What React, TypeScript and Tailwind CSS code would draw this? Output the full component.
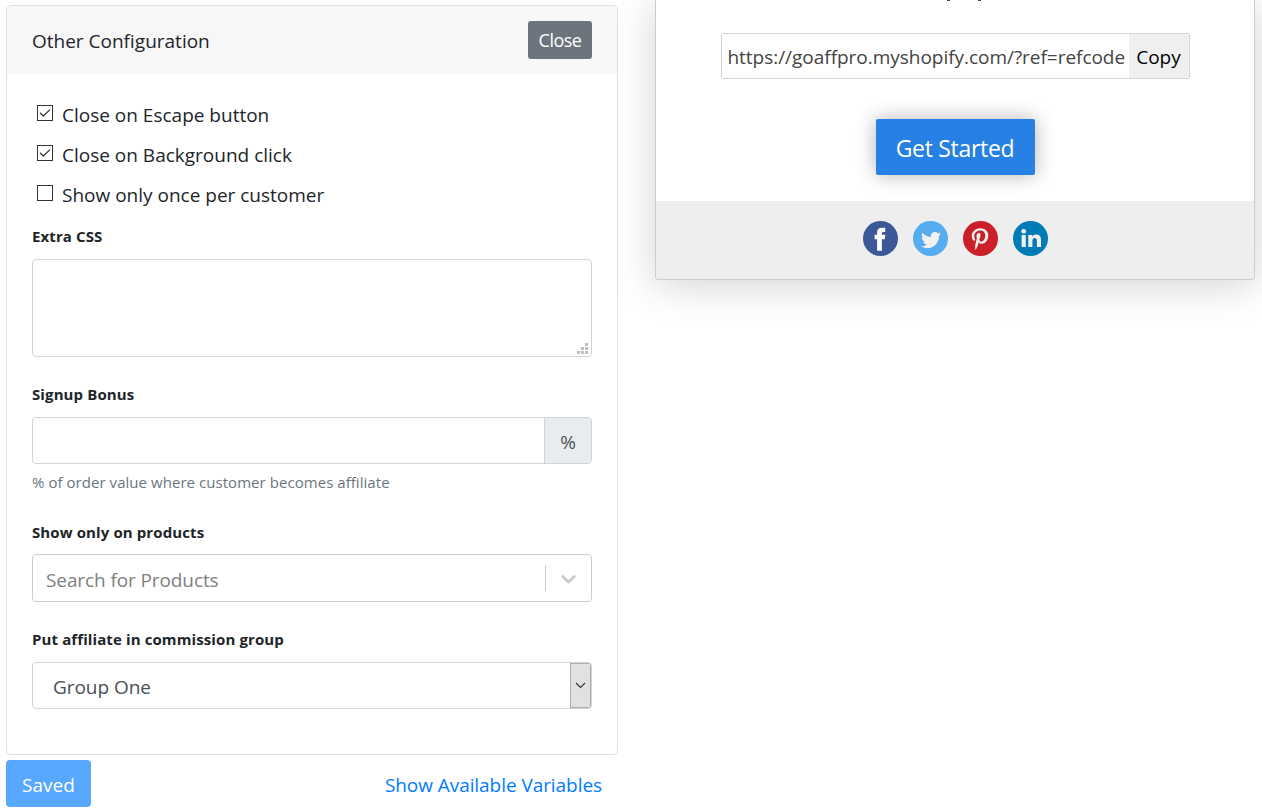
import React from "react";
import { FaTwitter, FaPinterestP } from "react-icons/fa";

function Check({ label, checked }: { label: string; checked?: boolean }) {
  return (
    <label className="flex h-[40px] items-center">
      <span className="mr-[9px] mb-[4px] ml-[5px] flex h-4 w-4 items-center justify-center border border-[#333] bg-white">
        {checked && (
          <svg width="12" height="12" viewBox="0 0 12 12" fill="none" stroke="#333" strokeWidth="1.3">
            <path d="M1 5.8 4.3 9 11 2.6" />
          </svg>
        )}
      </span>
      <span className="text-[19px] leading-[30px]">{label}</span>
    </label>
  );
}

function FieldLabel({ children }: { children: React.ReactNode }) {
  return <div className="flex h-6 items-center pb-[2px] text-[15px] font-bold tracking-[0.11px]">{children}</div>;
}

export default function App() {
  return (
    <div className="flex h-[811px] w-[1262px] items-start overflow-hidden bg-white font-['Open_Sans','Noto_Sans',sans-serif] whitespace-nowrap text-[#212529]">
      <section className="mt-[5px] ml-[6px] w-[612px] shrink-0">
        <div className="h-[750px] rounded-[5px] border border-[#dfdfdf]">
          <header className="flex h-[68px] items-center justify-between rounded-t-[4px] bg-[#f7f7f7] px-[25px]">
            <h2 className="mt-[2px] text-[19px] leading-[30px]">Other Configuration</h2>
            <button className="h-[38px] w-16 rounded-[3px] bg-[#6c757d] pt-px text-[18px] tracking-[-0.5px] text-white">Close</button>
          </header>
          <div className="px-[25px] pt-[21px]">
            <Check label="Close on Escape button" checked />
            <Check label="Close on Background click" checked />
            <Check label="Show only once per customer" />
            <div className="mt-[10px]">
              <FieldLabel>Extra CSS</FieldLabel>
            </div>
            <div className="mt-[10px] flex h-[98px] items-end justify-end rounded-[4px] border border-[#ced4da] pr-[2px] pb-px">
              <svg width="12" height="12" fill="#bfbfbf" shapeRendering="crispEdges">
                <path d="M8 0h3v3h-3zM4 4h3v3h-3zM8 4h3v3h-3zM0 8h3v3h-3zM4 8h3v3h-3zM8 8h3v3h-3z" />
              </svg>
            </div>
            <div className="mt-[26px]">
              <FieldLabel>Signup Bonus</FieldLabel>
            </div>
            <div className="mt-[10px] flex h-[47px] overflow-hidden rounded-[4px] border border-[#ced4da]">
              <div className="flex-1" />
              <div className="flex w-[47px] items-center justify-center border-l border-[#ced4da] bg-[#e9ecef] pt-[3px] text-[19px] text-[#495057]">%</div>
            </div>
            <div className="mt-[7px] flex h-6 items-center pb-[2px] text-[15px] tracking-[0.05px] text-[#6c757d]">% of order value where customer becomes affiliate</div>
            <div className="mt-[26px]">
              <FieldLabel>Show only on products</FieldLabel>
            </div>
            <div className="mt-[9px] flex h-12 items-center rounded-[4px] border border-[#ccc]">
              <span className="flex-1 pt-[4px] pl-[13px] text-[19px] tracking-[-0.1px] text-[#808080]">Search for Products</span>
              <span className="h-[26px] w-px bg-[#ccc]" />
              <span className="flex w-[45px] items-center justify-center">
                <svg width="25" height="25" viewBox="0 0 20 20" fill="#ccc">
                  <path d="M4.516 7.548c0.436-0.446 1.043-0.481 1.576 0l3.908 3.747 3.908-3.747c0.533-0.481 1.141-0.446 1.574 0 0.436 0.445 0.408 1.197 0 1.615-0.406 0.418-4.695 4.502-4.695 4.502-0.217 0.223-0.502 0.335-0.787 0.335s-0.57-0.112-0.789-0.335c0 0-4.287-4.084-4.695-4.502s-0.436-1.17 0-1.615z" />
                </svg>
              </span>
            </div>
            <div className="mt-[26px]">
              <FieldLabel>Put affiliate in commission group</FieldLabel>
            </div>
            <div className="mt-[10px] flex h-[47px] items-stretch overflow-hidden rounded-[4px] border border-[#ced4da]">
              <span className="flex flex-1 items-center pt-[4px] pl-5 text-[19px] tracking-[-0.05px] text-[#495057]">Group One</span>
              <span className="flex w-[21px] items-center justify-center border border-[#adadad] bg-[#e1e1e1]">
                <svg width="11" height="7" viewBox="0 0 11 7" fill="none" stroke="#333" strokeWidth="1.1">
                  <path d="M1 1 5.5 5.5 10 1" />
                </svg>
              </span>
            </div>
          </div>
        </div>
        <div className="mt-[5px] flex items-center justify-between pr-[16px]">
          <button className="h-[47px] w-[85px] rounded-[4px] bg-[#59a8ff] pt-[3px] text-[19px] text-white">Saved</button>
          <a className="pt-[3px] text-[19px] tracking-[-0.06px] text-[#007bff]">Show Available Variables</a>
        </div>
      </section>

      <section className="ml-[37px] flex h-[280px] w-[600px] shrink-0 flex-col items-center rounded-b-[4px] border border-t-0 border-[#ccc] bg-white shadow-[0_5px_40px_rgba(0,0,0,0.18)]">
        <div className="flex h-[33px] w-full justify-center gap-[28px] pl-[18px]">
          <span className="h-px w-[3px] bg-[#444]" />
          <span className="h-px w-[3px] bg-[#444]" />
        </div>
        <div className="flex h-[46px] w-[469px] rounded-[2px] border border-[#ced4da]">
          <div className="flex-1 pt-[8px] pl-[6px] text-[19px] leading-[30px] tracking-[-0.03px] text-[#444]">https://goaffpro.myshopify.com/?ref=refcode</div>
          <button className="w-[60px] shrink-0 bg-[#efefef] pt-[3px] text-[19px] text-black">Copy</button>
        </div>
        <button className="mt-10 h-14 w-[159px] rounded-[2px] bg-[#2780e3] pt-[3px] text-[23px] tracking-[-0.3px] text-white shadow-[0_0_20px_rgba(0,0,0,0.3)]">Get Started</button>
        <footer className="mt-[26px] flex h-[78px] w-full justify-center gap-[15px] rounded-b-[3px] bg-[#eee] pt-5">
          <svg width="35" height="35" viewBox="0 0 35 35">
            <circle cx="17.5" cy="17.5" r="17.5" fill="#3b5998" />
            <path fill="#fff" d="M14.1 29.8V18.2H11.6V13.8H14.1V11.6C14.1 8.5 15.6 6.8 19 6.8H22.2V11.1H20.4C19.2 11.1 18.9 11.6 18.9 12.6V13.8H22.3L21.8 18.2H18.9V29.8Z" />
          </svg>
          <span className="flex h-[35px] w-[35px] items-center justify-center rounded-full bg-[#55acee] pt-[2px] pl-px text-[#f1f1f1]"><FaTwitter size={20} /></span>
          <span className="flex h-[35px] w-[35px] items-center justify-center rounded-full bg-[#cb2027] pt-px text-[#f1f1f1]"><FaPinterestP size={22} /></span>
          <svg width="35" height="35" viewBox="0 0 35 35">
            <circle cx="17.5" cy="17.5" r="17.5" fill="#007bb6" />
            <circle cx="10.7" cy="10.3" r="2.4" fill="#f1f1f1" />
            <path fill="#f1f1f1" d="M8.6 13.9H12.8V26.1H8.6ZM15.3 13.9H19.2V15.6C20 14.3 21.4 13.5 23.2 13.5C27.1 13.5 28 16 28 19.4V26.1H23.9V20.1C23.9 18.6 23.7 17.1 21.8 17.1C19.8 17.1 19.4 18.6 19.4 20.1V26.1H15.3Z" />
          </svg>
        </footer>
      </section>
    </div>
  );
}
